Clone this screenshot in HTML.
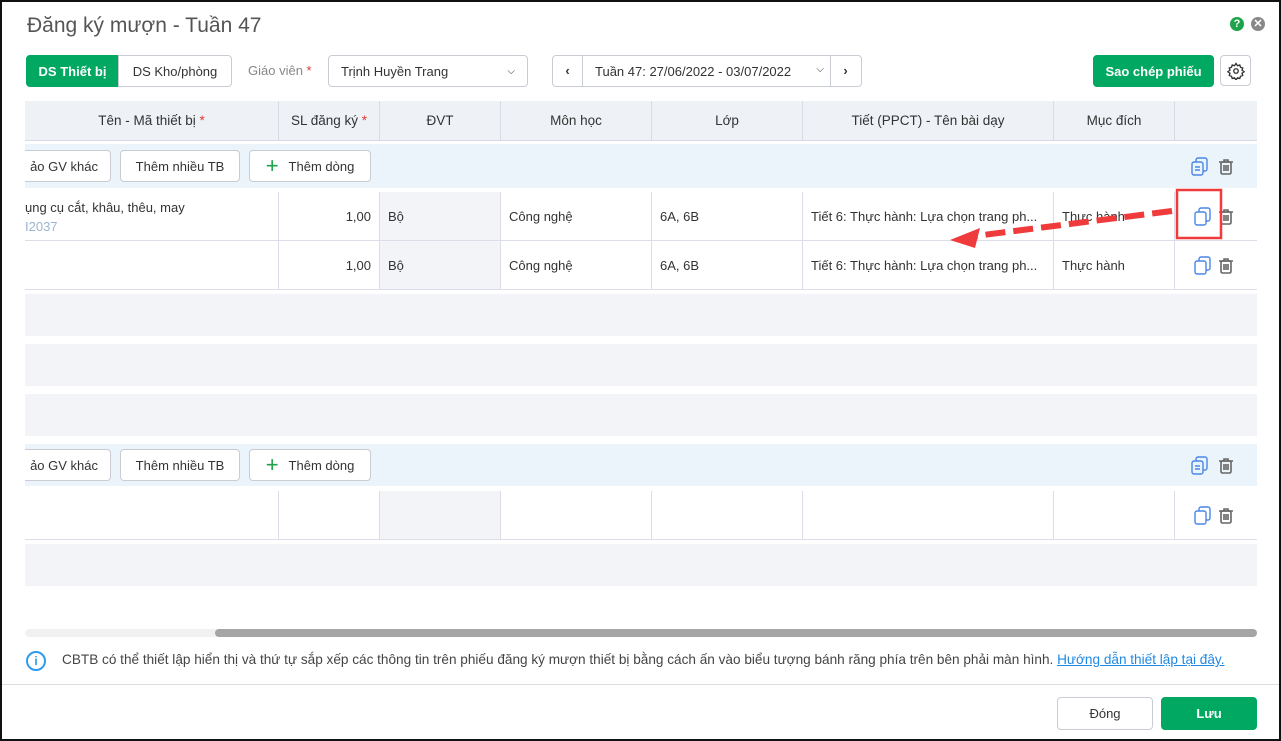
<!DOCTYPE html>
<html><head><meta charset="utf-8"><style>
*{box-sizing:border-box;margin:0;padding:0}
body{width:1281px;height:741px;overflow:hidden;background:#fff;font-family:"Liberation Sans",sans-serif;font-size:13px;color:#333;position:relative}
.a{position:absolute}
.frame{position:absolute;left:0;top:0;width:1281px;height:741px;border:2px solid #111;border-right-width:2px}
.btn{position:absolute;border:1px solid #c9ccd2;border-radius:4px;background:#fff;display:flex;align-items:center;justify-content:center;font-size:13px;color:#333}
.g{background:#00a862;color:#fff;border-color:#00a862;font-weight:bold}
.hd{position:absolute;top:101px;height:40px;background:#eef1f6;border-right:1px solid #d8dbe6;border-bottom:1px solid #d8dbe6;display:flex;align-items:center;justify-content:center;font-size:13.5px;color:#333}
.c{position:absolute;height:49px;border-right:1px solid #dcdde8;border-bottom:1px solid #dcdde8;display:flex;align-items:center;padding:0 8px;font-size:13px;color:#333;white-space:nowrap;overflow:hidden}
.grp{position:absolute;left:25px;width:1232px;background:#ebf4fb}
.gray{position:absolute;left:25px;width:1232px;height:42px;background:#f2f4f7}
.red{color:#e53935}
</style></head><body>
<div class="a" style="left:27px;top:14px;font-size:21px;color:#555">Đăng ký mượn - Tuần 47</div>
<div class="a" style="left:1230px;top:17px;width:14px;height:14px;border-radius:50%;background:#1ea34a;color:#fff;font-size:11px;font-weight:bold;text-align:center;line-height:14px">?</div>
<div class="a" style="left:1251px;top:17px;width:14px;height:14px;border-radius:50%;background:#888;color:#fff;font-size:11px;font-weight:bold;text-align:center;line-height:14px">✕</div>

<div class="btn g" style="left:26px;top:55px;width:93px;height:32px;border-radius:4px 0 0 4px">DS Thiết bị</div>
<div class="btn" style="left:118px;top:55px;width:114px;height:32px;border-radius:0 4px 4px 0">DS Kho/phòng</div>
<div class="a" style="left:248px;top:63px;color:#888">Giáo viên <span class="red">*</span></div>
<div class="btn" style="left:328px;top:55px;width:200px;height:32px;justify-content:space-between;padding:0 12px"><span>Trịnh Huyền Trang</span><span style="font-size:10px">⌵</span></div>
<div class="btn" style="left:552px;top:55px;width:310px;height:32px;justify-content:flex-start">
<span style="width:30px;text-align:center;border-right:1px solid #c9ccd2;height:30px;line-height:30px;font-weight:bold">‹</span>
<span style="width:247px;text-align:left;padding-left:12px">Tuần 47: 27/06/2022 - 03/07/2022 <span style="float:right;margin-right:6px;font-size:10px">⌵</span></span>
<span style="width:30px;text-align:center;border-left:1px solid #c9ccd2;height:30px;line-height:30px;font-weight:bold">›</span></div>
<div class="btn g" style="left:1093px;top:55px;width:121px;height:32px">Sao chép phiếu</div>
<div class="btn" style="left:1220px;top:55px;width:31px;height:31px"><svg width="18" height="18" viewBox="0 0 24 24" fill="none" stroke="#333" stroke-width="1.8"><circle cx="12" cy="12" r="3"/><path d="M12 2l2 3 3-1 1 3 3 1-1 3 3 2-3 2 1 3-3 1-1 3-3-1-2 3-2-3-3 1-1-3-3-1 1-3-3-2 3-2-1-3 3-1 1-3 3 1z"/></svg></div>

<div class="hd" style="left:25px;width:254px">Tên - Mã thiết bị&nbsp;<span class="red">*</span></div>
<div class="hd" style="left:279px;width:101px">SL đăng ký&nbsp;<span class="red">*</span></div>
<div class="hd" style="left:380px;width:121px">ĐVT</div>
<div class="hd" style="left:501px;width:151px">Môn học</div>
<div class="hd" style="left:652px;width:151px">Lớp</div>
<div class="hd" style="left:803px;width:251px">Tiết (PPCT) - Tên bài dạy</div>
<div class="hd" style="left:1054px;width:121px">Mục đích</div>
<div class="hd" style="left:1175px;width:82px;border-right:none"></div>

<div class="grp" style="top:144px;height:44px"></div>
<div class="btn" style="left:10px;top:150px;width:101px;height:32px;border-left:none;justify-content:flex-end;padding-right:12px">ảo GV khác</div>
<div class="a" style="left:0;top:148px;width:25px;height:40px;background:#fff"></div>
<div class="btn" style="left:120px;top:150px;width:120px;height:32px">Thêm nhiều TB</div>
<div class="btn" style="left:249px;top:150px;width:122px;height:32px"><span style="color:#1ea34a;font-size:22px;margin-right:10px;line-height:20px">+</span>Thêm dòng</div>

<div class="c" style="left:25px;top:192px;width:254px;display:block;padding:6px 0 0 0;line-height:19px">ụng cụ cắt, khâu, thêu, may<br><span style="color:#9bb4d0">I2037</span></div>
<div class="c" style="left:279px;top:192px;width:101px;justify-content:flex-end">1,00</div>
<div class="c" style="left:380px;top:192px;width:121px;background:#f2f4f7">Bộ</div>
<div class="c" style="left:501px;top:192px;width:151px">Công nghệ</div>
<div class="c" style="left:652px;top:192px;width:151px">6A, 6B</div>
<div class="c" style="left:803px;top:192px;width:251px">Tiết 6: Thực hành: Lựa chọn trang ph...</div>
<div class="c" style="left:1054px;top:192px;width:121px">Thực hành</div>
<div class="c" style="left:1175px;top:192px;width:82px;border-right:none"></div>

<div class="c" style="left:25px;top:241px;width:254px"></div>
<div class="c" style="left:279px;top:241px;width:101px;justify-content:flex-end">1,00</div>
<div class="c" style="left:380px;top:241px;width:121px;background:#f2f4f7">Bộ</div>
<div class="c" style="left:501px;top:241px;width:151px">Công nghệ</div>
<div class="c" style="left:652px;top:241px;width:151px">6A, 6B</div>
<div class="c" style="left:803px;top:241px;width:251px">Tiết 6: Thực hành: Lựa chọn trang ph...</div>
<div class="c" style="left:1054px;top:241px;width:121px">Thực hành</div>
<div class="c" style="left:1175px;top:241px;width:82px;border-right:none"></div>

<div class="gray" style="top:294px"></div>
<div class="gray" style="top:344px"></div>
<div class="gray" style="top:394px"></div>

<div class="grp" style="top:444px;height:42px"></div>
<div class="btn" style="left:10px;top:449px;width:101px;height:32px;justify-content:flex-end;padding-right:12px">ảo GV khác</div>
<div class="a" style="left:0;top:445px;width:25px;height:40px;background:#fff"></div>
<div class="btn" style="left:120px;top:449px;width:120px;height:32px">Thêm nhiều TB</div>
<div class="btn" style="left:249px;top:449px;width:122px;height:32px"><span style="color:#1ea34a;font-size:22px;margin-right:10px;line-height:20px">+</span>Thêm dòng</div>

<div class="c" style="left:25px;top:491px;width:254px"></div>
<div class="c" style="left:279px;top:491px;width:101px"></div>
<div class="c" style="left:380px;top:491px;width:121px;background:#f2f4f7"></div>
<div class="c" style="left:501px;top:491px;width:151px"></div>
<div class="c" style="left:652px;top:491px;width:151px"></div>
<div class="c" style="left:803px;top:491px;width:251px"></div>
<div class="c" style="left:1054px;top:491px;width:121px"></div>
<div class="c" style="left:1175px;top:491px;width:82px;border-right:none"></div>

<div class="gray" style="top:544px"></div>

<svg class="a" style="left:0;top:0" width="1281" height="600">
<defs>
<g id="cp" fill="none" stroke="#4a86e8" stroke-width="1.4"><rect x="1" y="5" width="11" height="13" rx="2"/><path d="M5 5V3a2 2 0 0 1 2-2h7a2 2 0 0 1 2 2v9a2 2 0 0 1-2 2h-2"/></g>
<g id="cpl" fill="none" stroke="#4a86e8" stroke-width="1.4"><rect x="1" y="5" width="11" height="13" rx="2"/><path d="M5 5V3a2 2 0 0 1 2-2h7a2 2 0 0 1 2 2v9a2 2 0 0 1-2 2h-2"/><path d="M4 10h5M4 13h5"/></g>
<g id="tr" fill="none" stroke="#666" stroke-width="1.6"><path d="M1 4h14M6 4V2h4v2"/><rect x="3" y="4" width="10" height="12" rx="1.5"/><path d="M6 7v6M8 7v6M10 7v6"/></g>
</defs>
<use href="#cpl" x="1191" y="157"/><use href="#tr" x="1218" y="158"/>
<use href="#cp" x="1194" y="207"/><use href="#tr" x="1218" y="208"/>
<use href="#cp" x="1194" y="256"/><use href="#tr" x="1218" y="257"/>
<use href="#cpl" x="1191" y="456"/><use href="#tr" x="1218" y="457"/>
<use href="#cp" x="1194" y="506"/><use href="#tr" x="1218" y="507"/>
<rect x="1177" y="190" width="44" height="48" fill="none" stroke="#ef3b3b" stroke-width="2.5"/>
<path d="M1172 211 L975 236" stroke="#ef3b3b" stroke-width="6" stroke-dasharray="20 8"/>
<path d="M950 240 L980 228 L975 248 Z" fill="#ef3b3b"/>
</svg>

<div class="a" style="left:25px;top:629px;width:1232px;height:8px;background:#f1f1f1;border-radius:4px"></div>
<div class="a" style="left:215px;top:629px;width:1042px;height:8px;background:#a5a5a5;border-radius:4px"></div>

<div class="a" style="left:26px;top:651px;width:20px;height:20px;border:2px solid #2d9cf0;border-radius:50%;color:#2d9cf0;font-size:12px;font-weight:bold;text-align:center;line-height:16px">i</div>
<div class="a" style="left:62px;top:652px;font-size:13.6px;color:#444;white-space:nowrap">CBTB có thể thiết lập hiển thị và thứ tự sắp xếp các thông tin trên phiếu đăng ký mượn thiết bị bằng cách ấn vào biểu tượng bánh răng phía trên bên phải màn hình. <span style="color:#1e88e5;text-decoration:underline">Hướng dẫn thiết lập tại đây.</span></div>
<div class="a" style="left:2px;top:684px;width:1277px;height:1px;background:#ddd"></div>
<div class="btn" style="left:1057px;top:697px;width:96px;height:33px">Đóng</div>
<div class="btn g" style="left:1161px;top:697px;width:96px;height:33px">Lưu</div>
<div class="frame"></div>
</body></html>
